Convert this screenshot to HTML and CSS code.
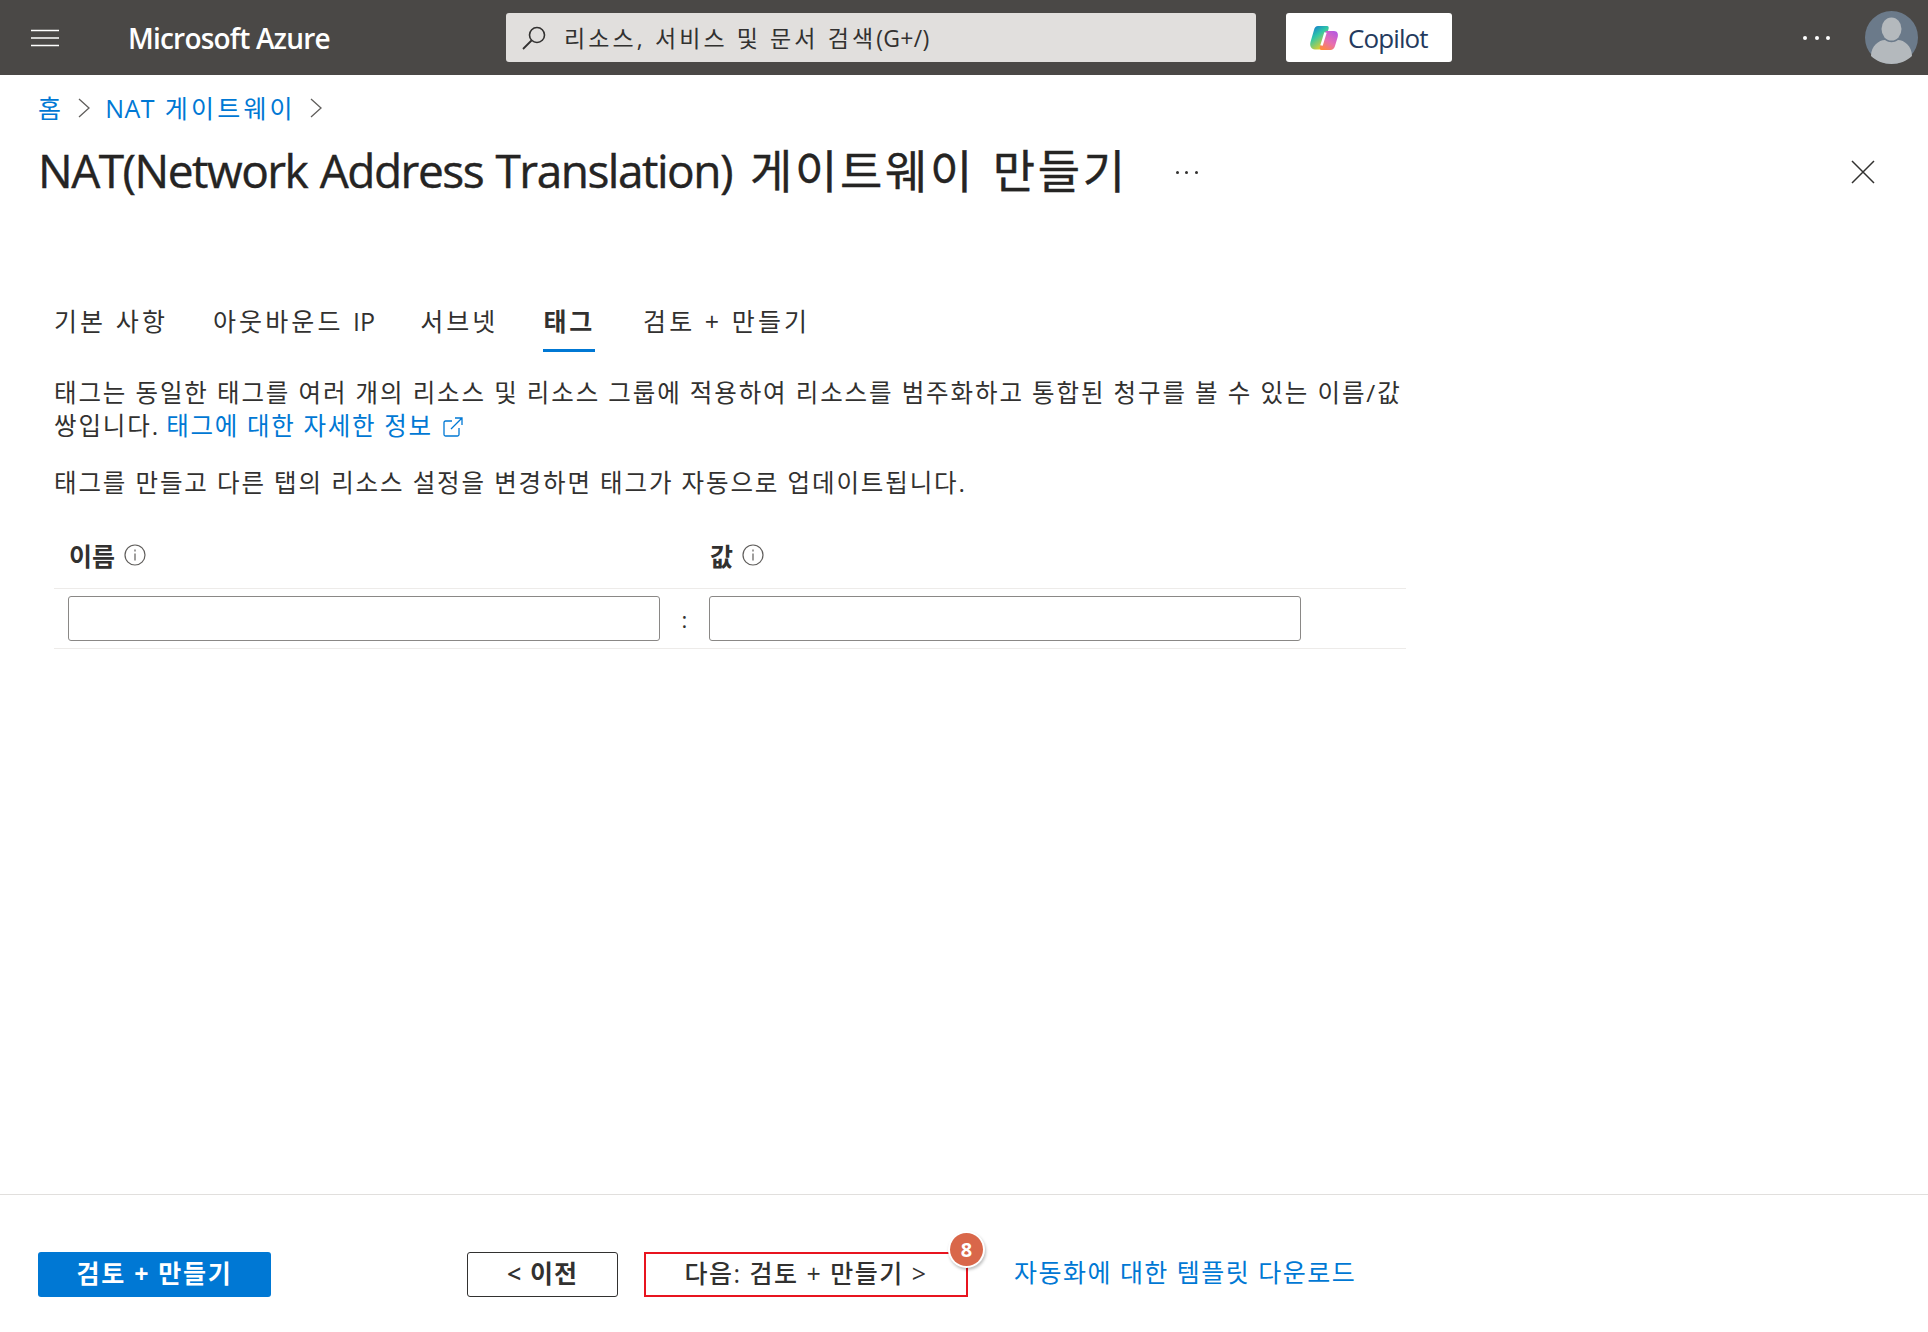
FILE: index.html
```html
<!DOCTYPE html>
<html lang="ko">
<head>
<meta charset="utf-8">
<title>NAT 게이트웨이 만들기</title>
<link rel="stylesheet" href="styles.css">
</head>
<body>
<div class="page">
  <header class="topbar">
    <svg class="hamburger" viewBox="0 0 28 18" width="28" height="18"><path d="M0 1.500h28M0 9h28M0 16.500h28" stroke="#fff" stroke-width="1.600" fill="none"/></svg>
    <div class="brand">Microsoft Azure</div>
    <div class="search">
      <svg class="search-icon" viewBox="0 0 26 24" width="26" height="24"><ellipse cx="16" cy="9" rx="7.500" ry="7.500" fill="none" stroke="#323130" stroke-width="1.600"/><path d="M10.500 14.500 2 23" stroke="#323130" stroke-width="1.800" fill="none"/></svg>
      <span class="search-text">리소스, 서비스 및 문서 검색<span class="search-key">(G+/)</span></span>
    </div>
    <div class="copilot">
      <svg class="copilot-icon" viewBox="0 0 30 26" width="30" height="26">
        <defs>
          <linearGradient id="cpa" x1="0" y1="0" x2="0.6" y2="1"><stop offset="0" stop-color="#0f6cd8"/><stop offset="0.45" stop-color="#2fc6a8"/><stop offset="1" stop-color="#f2d021"/></linearGradient>
          <linearGradient id="cpb" x1="0.8" y1="0" x2="0.2" y2="1"><stop offset="0" stop-color="#b65ae0"/><stop offset="0.55" stop-color="#e86fb0"/><stop offset="1" stop-color="#ff8a3c"/></linearGradient>
        </defs>
        <path d="M9 1h9c2 0 2 2 1.400 3.500L14 22c-.6 1.800-2 2.500-3.500 2.500H6C2 24 .5 21 1.500 17L5 5c.6-2.400 2-4 4-4z" fill="url(#cpa)"/>
        <path d="M17 6h8c3.500 0 4.500 3 3.700 6l-2.700 9c-.8 2.800-2.500 4-4.500 4h-9c-2 0-2-2-1.500-3.500L16 9c.3-1.500.6-3 1-3z" fill="url(#cpb)"/>
        <path d="M16.500 7.500 12.500 20.500" stroke="#fff" stroke-width="2.500" fill="none"/>
      </svg>
      <span class="copilot-label">Copilot</span>
    </div>
    <div class="more-dots"><i></i><i></i><i></i></div>
    <svg class="avatar" viewBox="0 0 53 53" width="53" height="53">
      <circle cx="26.500" cy="26.500" r="26.500" fill="#6b7a8a"/>
      <ellipse cx="26.500" cy="18" rx="10" ry="11.500" fill="#b4b9bd"/>
      <path d="M6 45c0-10 8-16 14-16 4 3 9 3 13 0 6 0 14 6 14 16-5 5-13 8-20.500 8S11 50 6 45z" fill="#b4b9bd"/>
    </svg>
  </header>

  <main class="main">
    <nav class="crumbs">
      <a class="link">홈</a>
      <svg class="chev" viewBox="0 0 12 20" width="12" height="20"><path d="M1 1l10 9-10 9" fill="none" stroke="#605e5c" stroke-width="1.300"/></svg>
      <a class="link"><span class="crumb-latin">NAT</span> 게이트웨이</a>
      <svg class="chev" viewBox="0 0 12 20" width="12" height="20"><path d="M1 1l10 9-10 9" fill="none" stroke="#605e5c" stroke-width="1.300"/></svg>
    </nav>
    <div class="title-row">
      <h1 class="title"><span class="title-latin">NAT(Network Address Translation)</span> <span class="title-ko">게이트웨이 만들기</span></h1>
      <div class="title-dots"><i></i><i></i><i></i></div>
      <svg class="close" viewBox="0 0 24 24" width="24" height="24"><path d="M1 1l22 22M23 1 1 23" stroke="#323130" stroke-width="1.500" fill="none"/></svg>
    </div>

    <div class="tabs">
      <div class="tab">기본 사항</div>
      <div class="tab">아웃바운드 <span class="tab-latin">IP</span></div>
      <div class="tab">서브넷</div>
      <div class="tab tab-active">태그</div>
      <div class="tab">검토 + 만들기</div>
    </div>

    <section class="content">
      <p class="para">태그는 동일한 태그를 여러 개의 리소스 및 리소스 그룹에 적용하여 리소스를 범주화하고 통합된 청구를 볼 수 있는 이름/값 쌍입니다. <a class="link para-link">태그에 대한 자세한 정보</a> <svg class="ext" viewBox="0 0 20 20" width="20" height="20"><path d="M9 4H2.500A1.500 1.500 0 0 0 1 5.500v12A1.500 1.500 0 0 0 2.500 19h12a1.500 1.500 0 0 0 1.500-1.500V11M8 12 19 1M12 1h7v7" fill="none" stroke="#0078d4" stroke-width="1.300"/></svg></p>
      <p class="para para-second">태그를 만들고 다른 탭의 리소스 설정을 변경하면 태그가 자동으로 업데이트됩니다.</p>

      <div class="tag-table">
        <div class="tag-head">
          <div class="tag-col"><b>이름</b><svg class="info" viewBox="0 0 22 22" width="22" height="22"><circle cx="11" cy="11" r="10" fill="none" stroke="#605e5c" stroke-width="1.200"/><path d="M11 9.500V16.500M11 5.500v2" stroke="#605e5c" stroke-width="1.200"/></svg></div>
          <div class="tag-sep"></div>
          <div class="tag-col"><b>값</b><svg class="info" viewBox="0 0 22 22" width="22" height="22"><circle cx="11" cy="11" r="10" fill="none" stroke="#605e5c" stroke-width="1.200"/><path d="M11 9.500V16.500M11 5.500v2" stroke="#605e5c" stroke-width="1.200"/></svg></div>
        </div>
        <div class="tag-row">
          <div class="tag-input"></div>
          <div class="tag-sep">:</div>
          <div class="tag-input"></div>
        </div>
      </div>
    </section>
  </main>

  <footer class="footer">
    <button class="btn btn-primary">검토 + 만들기</button>
    <button class="btn btn-prev">&lt; 이전</button>
    <button class="btn btn-next">다음: 검토 + 만들기 &gt;<span class="badge">8</span></button>
    <a class="link footer-link">자동화에 대한 템플릿 다운로드</a>
  </footer>
</div>
</body>
</html>
```
FILE: styles.css
```css
* { box-sizing: border-box; }
html, body { margin: 0; padding: 0; background: #fff; }
body {
  font-family: "Open Sans", "Noto Sans CJK KR", sans-serif;
  color: #323130;
  font-size: 24px;
}
p, h1 { margin: 0; }
.page { width: 1928px; height: 1332px; display: flex; flex-direction: column; overflow: hidden; }
.link { color: #0078d4; }

.topbar {
  height: 75px; flex: none; background: #4a4846; display: flex; align-items: center; padding-left: 31px; color: #fff;
}
.hamburger { flex: none; margin-top: 1px; }
.brand {
  margin-left: 69px; width: 300px; flex: none; font-size: 28px; font-weight: 600; letter-spacing: -0.800px; white-space: nowrap;
}
.search {
  margin-left: 78px; width: 750px; height: 49px; flex: none; background: #e1dfdd; border-radius: 3px;
  display: flex; align-items: center; padding-left: 15px; color: #323130;
}
.search-icon { flex: none; }
.search-text { margin-left: 17px; margin-top: -2px; font-size: 23px; letter-spacing: 3.100px; white-space: nowrap; }
.search-key { letter-spacing: 0.300px; }
.copilot {
  margin-left: 30px; width: 166px; height: 49px; flex: none; background: #fff; border-radius: 3px;
  display: flex; align-items: center; padding-left: 23px;
}
.copilot-label { margin-left: 9px; font-size: 26px; color: #243a5e; letter-spacing: -0.900px; }
.more-dots { margin-left: 351px; width: 27px; display: flex; justify-content: space-between; flex: none; }
.more-dots i { width: 4px; height: 4px; border-radius: 50%; background: #fff; display: block; }
.avatar { margin-left: 35px; flex: none; }

.main { flex: 1; padding: 20px 0 0 0; }
.crumbs { display: flex; align-items: center; height: 26px; margin: 0 0 0 38px; font-size: 25px; white-space: nowrap; }
.crumbs .link { line-height: 26px; letter-spacing: 3.200px; }
.crumbs .crumb-latin { letter-spacing: 0.500px; }
.chev { flex: none; margin: 0 15px 0 14px; }
.title-row { display: flex; align-items: center; margin: 19px 0 0 38px; height: 60px; }
.title { font-size: 46px; font-weight: 400; color: #252423; white-space: nowrap; line-height: 60px; -webkit-text-stroke: 0.400px #252423; word-spacing: 3px; }
.title-latin { letter-spacing: -1.500px; word-spacing: 2px; }
.title-ko { letter-spacing: 2.700px; margin-left: 3px; }
.title-dots { margin-left: 48px; width: 22px; display: flex; justify-content: space-between; flex: none; margin-top: 4px; }
.title-dots i { width: 3px; height: 3px; border-radius: 50%; background: #323130; display: block; }
.close { margin-left: 653px; flex: none; margin-top: 4px; }

.tabs { display: flex; margin: 103px 0 0 54px; height: 49px; }
.tab { font-size: 25px; line-height: 37px; letter-spacing: 3.100px; margin-right: 45px; padding: 0; white-space: nowrap; height: 49px; }
.tab-latin { letter-spacing: 0; }
.tab-active { font-weight: 700; letter-spacing: 2.800px; margin-right: 48px; border-bottom: 3px solid #0078d4; }

.content { margin: 24px 0 0 54px; width: 1352px; }
.para { font-size: 24.500px; line-height: 33px; letter-spacing: 1.880px; width: 1352px; word-break: keep-all; }
.para-link { margin-left: -2px; letter-spacing: 1.700px; }
.para-second { margin-top: 24px; }
.ext { vertical-align: -2px; margin-left: 2px; }

.tag-table { margin-top: 32px; }
.tag-head { display: flex; height: 58px; align-items: center; padding: 0 0 10px 14px; border-bottom: 1px solid #edebe9; }
.tag-head b { font-size: 25px; font-weight: 700; margin-left: 1px; }
.tag-col { display: flex; align-items: center; width: 592px; gap: 9px; flex: none; }
.tag-sep { width: 49px; flex: none; text-align: center; font-size: 22px; }
.tag-row { display: flex; height: 60px; align-items: center; padding-left: 14px; border-bottom: 1px solid #edebe9; }
.tag-input { width: 592px; height: 45px; flex: none; border: 1px solid #8a8886; border-radius: 3px; background: #fff; }

.footer { flex: none; height: 138px; border-top: 1.500px solid #e1dfdd; display: flex; align-items: center; padding: 0 0 0 38px; }
.btn { height: 45px; border-radius: 3px; font-family: inherit; font-size: 25px; line-height: 1; padding: 0 0 3px; background: #fff; color: #323130; flex: none; position: relative; margin-top: 22px; }
.btn-primary { width: 233px; background: #0078d4; border: 0; color: #fff; font-weight: 700; letter-spacing: 1.700px; }
.btn-prev { width: 151px; margin-left: 196px; border: 1px solid #323130; font-weight: 600; letter-spacing: 1px; }
.btn-next { width: 324px; margin-left: 26px; border: 2px solid #e8141f; border-radius: 0; font-weight: 500; letter-spacing: 1.500px; }
.badge {
  position: absolute; top: -21px; right: -17px; width: 33px; height: 33px; border-radius: 50%; background: #d9674a; color: #fff;
  font-family: "Open Sans", sans-serif; font-size: 20px; font-weight: 700; letter-spacing: 0; display: flex; align-items: center; justify-content: center;
  box-shadow: 0 0 0 2px #fff, 1px 2px 3px 2px rgba(0,0,0,.25);
}
.footer-link { margin-left: 46px; margin-top: 15px; font-size: 25px; letter-spacing: 1.480px; white-space: nowrap; }
```
